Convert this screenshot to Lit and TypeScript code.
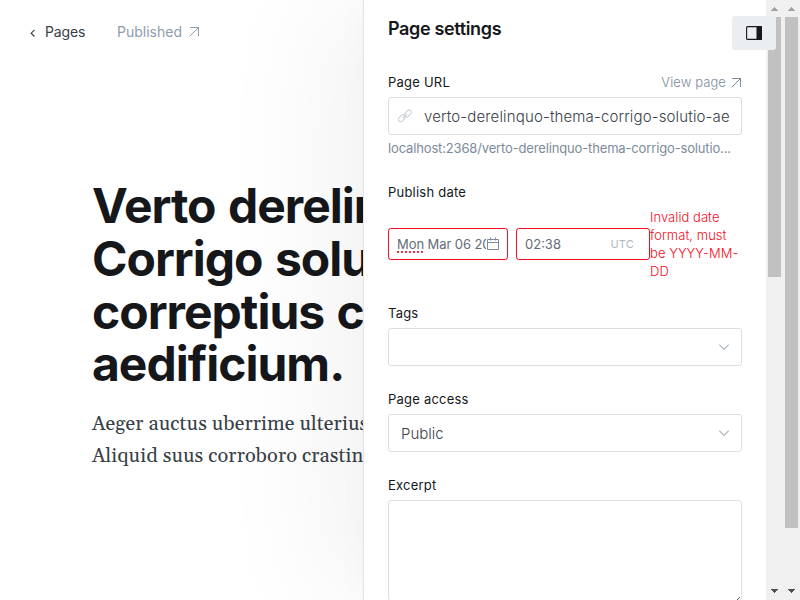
import { LitElement, html, svg, css } from "lit";
import { customElement, property } from "lit/decorators.js";

const arrow = html`<svg class="arrow" width="11" height="11" viewBox="0 0 11 11" fill="none" stroke="currentColor"><path d="M.8 10.2 10 1M1.2 1.500h8.300v8.500"/></svg>`;
const chevron = html`<svg class="chevron" width="12" height="8" viewBox="0 0 12 8" fill="none" stroke="currentColor" stroke-width="1.1"><path d="M1.3 1.700l4.700 4.700 4.700-4.700"/></svg>`;

@customElement("scroll-rail")
export class ScrollRail extends LitElement {
  @property({ type: Number }) thumb = 100;
  static styles = css`
    :host { display: flex; flex-direction: column; width: 17px; height: 600px; background: #f0f0f0; flex: none; }
    .cap { height: 17px; flex: none; display: block; }
    .thumb { width: 13px; margin-left: 2px; background: #c1c1c1; flex: none; }
    .space { flex: 1; }
  `;
  render() {
    const cap = (d: string, fill: string) => html`<svg class="cap" width="17" height="17" viewBox="0 0 17 17">${svg`<path d=${d} fill=${fill} shape-rendering="crispEdges"/>`}</svg>`;
    return html`${cap("M5 11h7l-3.5-4z", "#a3a3a3")}
      <div class="thumb" style="height:${this.thumb}px"></div>
      <div class="space"></div>
      ${cap("M5 6h7l-3.5 4z", "#505050")}`;
  }
}

@customElement("app-root")
export class AppRoot extends LitElement {
  static styles = css`
    * { box-sizing: border-box; }
    :host { display: flex; position: relative; width: 800px; height: 600px; overflow: hidden; background: #fff; color: #15171a; font-family: Inter, "Liberation Sans", sans-serif; }
    svg { display: block; flex: none; }
    .editor { width: 363px; flex: none; height: 600px; overflow: hidden; white-space: nowrap; }
    .nav { display: flex; align-items: center; height: 34px; margin-top: 15px; padding-left: 29px; font-size: 14px; }
    .nav > span { line-height: 16px; margin-top: -1px; }
    .back { display: flex; align-items: center; gap: 9px; width: 88px; color: #394047; letter-spacing: -.15px; }
    .status { display: flex; align-items: center; gap: 7px; color: #8e9cac; }
    h1 { margin: 131px 0 0 92px; font-size: 48px; line-height: 52.8px; font-weight: 700; letter-spacing: -1px; word-spacing: 2px; }
    .body { margin: 17px 0 0 92px; font-family: Georgia, Gelasio, "Liberation Serif", serif; font-size: 20px; line-height: 32px; letter-spacing: .1px; color: #394047; }
    .panel { display: flex; width: 420px; height: 600px; flex: none; background: #fff; border-left: 1px solid #e2e3e4; box-shadow: -50px 0 100px rgba(0,0,0,.045), -4px 0 30px rgba(0,0,0,.02); }
    .form { width: 402px; padding: 0 24px; height: 600px; overflow: hidden; font-size: 13px; }
    h4 { margin: 17px 0 32px; font-size: 18px; line-height: 24px; font-weight: 600; letter-spacing: -.35px; }
    .label { display: flex; justify-content: space-between; align-items: center; height: 18px; font-weight: 400; letter-spacing: .22px; }
    .view { display: flex; align-items: center; gap: 5px; font-weight: 350; color: #7c8b9a; letter-spacing: .1px; }
    .field { display: flex; align-items: center; height: 38px; margin-top: 6px; border: 1px solid #dddedf; border-radius: 3px; padding: 0 12px; font-size: 15px; font-weight: 350; color: #394047; }
    .url { padding-left: 9px; gap: 12px; letter-spacing: .15px; white-space: nowrap; }
    .link { color: #ccd1d5; }
    .hint { margin: 4px 0 26px; line-height: 18px; height: 18px; font-weight: 375; color: #7c8b9a; letter-spacing: -.15px; white-space: nowrap; }
    .row { display: flex; align-items: center; height: 72px; margin: 7px 0 24px; }
    .date, .time { display: flex; align-items: center; height: 32px; border: 1px solid #f50b23; border-radius: 3px; padding: 0 8px; color: #626d79; flex: none; white-space: nowrap; }
    .date { width: 120px; margin-right: 8px; }
    .datetext { width: 89px; line-height: 24px; overflow: hidden; flex: none; letter-spacing: -.08px; }
    .bad { text-decoration: underline dotted #f5303f 2px; text-underline-offset: 2px; text-decoration-skip-ink: none; }
    .cal { color: #7c8b9a; }
    .time { width: 134px; justify-content: space-between; padding-right: 15px; }
    .utc { font-size: 11px; color: #aeb7c1; letter-spacing: .2px; }
    .error { width: 92px; line-height: 18px; font-weight: 300; color: #f50b23; letter-spacing: .05px; }
    .select { justify-content: space-between; margin-bottom: 24px; }
    .chevron { color: #abb4be; margin-right: -1px; }
    .area { height: 101px; position: relative; }
    .grip { position: absolute; right: 1px; bottom: 0; color: #505050; }
    .toggle { position: absolute; left: 732px; top: 16px; width: 44px; height: 34px; display: flex; align-items: center; justify-content: center; background: #ebeef0; border-radius: 3px; }
  `;
  render() {
    return html`
      <main class="editor">
        <nav class="nav">
          <span class="back"><svg width="7" height="10" viewBox="0 0 7 10" fill="none" stroke="#394047" stroke-width="1.2"><path d="M5.500 2.900 2.200 6.200l3.300 3.300"/></svg>Pages</span>
          <span class="status">Published ${arrow}</span>
        </nav>
        <h1>Verto derelinquo<br>Corrigo solutio<br>correptius c<br>aedificium.</h1>
        <div class="body">Aeger auctus uberrime ulterius<br>Aliquid suus corroboro crastinus</div>
      </main>
      <aside class="panel">
        <div class="form">
          <h4>Page settings</h4>
          <div class="label">Page URL<span class="view">View page ${arrow}</span></div>
          <div class="field url"><svg class="link" width="14" height="14" viewBox="0 0 14 14" fill="none" stroke="currentColor" stroke-width="1.1"><rect x="-.2" y="7" width="7.8" height="4.6" rx="2.3" transform="rotate(-45 3.7 9.3)"/><rect x="5.8" y="2.2" width="8" height="4.6" rx="2.3" transform="rotate(-45 9.8 4.5)"/><path d="M4.8 9.2l4.4-4.4"/></svg>verto-derelinquo-thema-corrigo-solutio-ae</div>
          <div class="hint">localhost:2368/verto-derelinquo-thema-corrigo-solutio...</div>
          <div class="label">Publish date</div>
          <div class="row">
            <div class="date"><span class="datetext"><span class="bad">Mon</span> Mar 06 20</span><svg class="cal" width="14" height="14" viewBox="0 0 14 14" fill="none" stroke="currentColor"><path d="M1.5 2.5h11v10h-11zM1.5 5.5h11M4.5.5v3M9.5.5v3"/></svg></div>
            <div class="time">02:38<span class="utc">UTC</span></div>
            <div class="error">Invalid date format, must be YYYY-MM-DD</div>
          </div>
          <div class="label">Tags</div>
          <div class="field select"><span></span>${chevron}</div>
          <div class="label">Page access</div>
          <div class="field select">Public${chevron}</div>
          <div class="label">Excerpt</div>
          <div class="field area"><svg class="grip" width="3" height="3" viewBox="0 0 3 3" stroke="currentColor"><path d="M0 3 3 0"/></svg></div>
        </div>
        <scroll-rail .thumb=${260}></scroll-rail>
      </aside>
      <scroll-rail .thumb=${511}></scroll-rail>
      <div class="toggle"><svg width="16" height="14" viewBox="0 0 16 14"><rect x=".6" y=".6" width="14.8" height="12.8" rx="1" fill="none" stroke="#15171a" stroke-width="1.1"/><path d="M10.5 0H15q1 0 1 1v12q0 1-1 1h-4.500z" fill="#15171a"/></svg></div>
    `;
  }
}
